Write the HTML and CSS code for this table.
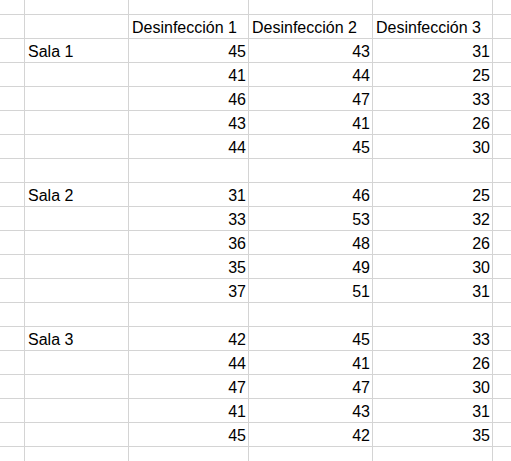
FILE: index.html
```html
<!DOCTYPE html>
<html lang="es">
<head>
<meta charset="utf-8">
<title>Hoja</title>
<link rel="stylesheet" href="styles.css">
</head>
<body>
<div class="sheet">
  <div class="c"></div><div class="c"></div><div class="c"></div><div class="c"></div><div class="c"></div><div class="c"></div>
  <div class="c"></div><div class="c"></div><div class="c t">Desinfección 1</div><div class="c t">Desinfección 2</div><div class="c t">Desinfección 3</div><div class="c"></div>
  <div class="c"></div><div class="c t">Sala 1</div><div class="c n">45</div><div class="c n">43</div><div class="c n">31</div><div class="c"></div>
  <div class="c"></div><div class="c"></div><div class="c n">41</div><div class="c n">44</div><div class="c n">25</div><div class="c"></div>
  <div class="c"></div><div class="c"></div><div class="c n">46</div><div class="c n">47</div><div class="c n">33</div><div class="c"></div>
  <div class="c"></div><div class="c"></div><div class="c n">43</div><div class="c n">41</div><div class="c n">26</div><div class="c"></div>
  <div class="c"></div><div class="c"></div><div class="c n">44</div><div class="c n">45</div><div class="c n">30</div><div class="c"></div>
  <div class="c"></div><div class="c"></div><div class="c"></div><div class="c"></div><div class="c"></div><div class="c"></div>
  <div class="c"></div><div class="c t">Sala 2</div><div class="c n">31</div><div class="c n">46</div><div class="c n">25</div><div class="c"></div>
  <div class="c"></div><div class="c"></div><div class="c n">33</div><div class="c n">53</div><div class="c n">32</div><div class="c"></div>
  <div class="c"></div><div class="c"></div><div class="c n">36</div><div class="c n">48</div><div class="c n">26</div><div class="c"></div>
  <div class="c"></div><div class="c"></div><div class="c n">35</div><div class="c n">49</div><div class="c n">30</div><div class="c"></div>
  <div class="c"></div><div class="c"></div><div class="c n">37</div><div class="c n">51</div><div class="c n">31</div><div class="c"></div>
  <div class="c"></div><div class="c"></div><div class="c"></div><div class="c"></div><div class="c"></div><div class="c"></div>
  <div class="c"></div><div class="c t">Sala 3</div><div class="c n">42</div><div class="c n">45</div><div class="c n">33</div><div class="c"></div>
  <div class="c"></div><div class="c"></div><div class="c n">44</div><div class="c n">41</div><div class="c n">26</div><div class="c"></div>
  <div class="c"></div><div class="c"></div><div class="c n">47</div><div class="c n">47</div><div class="c n">30</div><div class="c"></div>
  <div class="c"></div><div class="c"></div><div class="c n">41</div><div class="c n">43</div><div class="c n">31</div><div class="c"></div>
  <div class="c"></div><div class="c"></div><div class="c n">45</div><div class="c n">42</div><div class="c n">35</div><div class="c"></div>
  <div class="c"></div><div class="c"></div><div class="c"></div><div class="c"></div><div class="c"></div><div class="c"></div>
</div>
</body>
</html>
```
FILE: styles.css
```css
html, body {
  margin: 0;
  padding: 0;
  background: #ffffff;
}
.sheet {
  display: grid;
  grid-template-columns: 24px 103px 119px 123px 119px 18px;
  grid-template-rows: 14px repeat(18, 23px) 14px;
  gap: 1px;
  background: #d4d4d4;
  width: 511px;
  height: 461px;
  overflow: hidden;
  font-family: "Liberation Sans", Arial, sans-serif;
  font-size: 16px;
  line-height: 18px;
  color: #000000;
}
.c {
  background: #ffffff;
  display: flex;
  align-items: flex-end;
  white-space: nowrap;
  overflow: hidden;
  padding-bottom: 1px;
}
.t {
  justify-content: flex-start;
  padding-left: 3px;
}
.n {
  justify-content: flex-end;
  padding-right: 2px;
}
```
